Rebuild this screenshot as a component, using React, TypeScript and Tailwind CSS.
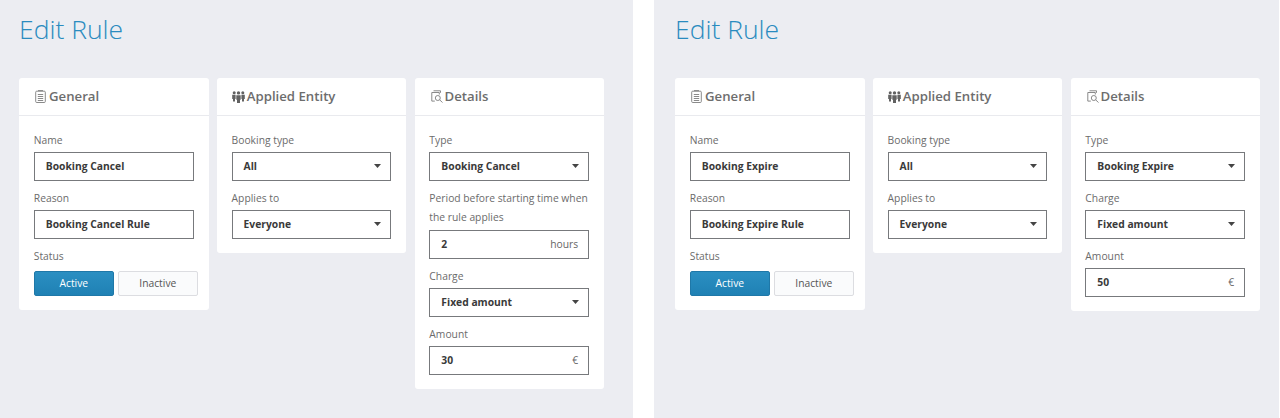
const font = "font-['Open_Sans',sans-serif]";

function Label({ children }: { children: React.ReactNode }) {
  return <div className="whitespace-nowrap text-[10.3px] leading-[19px] text-[#6b6b6b]">{children}</div>;
}

function Caret() {
  return (
    <svg width="7" height="4" viewBox="0 0 7 4" className="mr-[-1px] mb-[1px] shrink-0">
      <path d="M0 0h7L3.5 4z" fill="#444" />
    </svg>
  );
}

function Field({ label, value, suffix, select, tall }: { label: React.ReactNode; value: string; suffix?: string; select?: boolean; tall?: boolean }) {
  return (
    <div className="flex flex-col pt-[8px] first:pt-[15px]">
      <Label>{label}</Label>
      <div className={`${tall ? "mt-[3px]" : "mt-[2px]"} flex h-[29px] items-center justify-between border border-[#77797c] bg-white pl-[11px] pr-[10px]`}>
        <span className="text-[10.3px] font-bold text-[#3a3a3a]">{value}</span>
        {select && <Caret />}
        {suffix && <span className="text-[10.3px] text-[#666]">{suffix}</span>}
      </div>
    </div>
  );
}

function DocIcon() {
  return (
    <svg width="11" height="13" viewBox="0 0 11 13" fill="none" stroke="#7d7d7d" strokeWidth="0.9" className="ml-[1px]">
      <rect x="0.7" y="1.2" width="9.6" height="11.3" rx="1" />
      <path d="M3 0.6h5M2.8 4.5h5.4M2.8 6.5h5.4M2.8 8.5h5.4M2.8 10.5h5.4" />
    </svg>
  );
}

function PeopleIcon() {
  return (
    <svg width="13" height="12" viewBox="0 0 13 12" fill="#626262" className="mr-[-1px]">
      <circle cx="2.2" cy="1.8" r="1.5" />
      <circle cx="6.5" cy="1.9" r="1.7" />
      <circle cx="10.8" cy="1.8" r="1.5" />
      <path d="M0.2 3.8h3.4v4.2H3V10.6H1V8H0.2zM9.4 3.8h3.4V8H12v2.6H10V8h-.6zM4.3 4.2h4.4v4.6H8V12H5V8.8h-.7z" />
    </svg>
  );
}

function SearchDocIcon() {
  return (
    <svg width="12" height="13" viewBox="0 0 12 13" fill="none" stroke="#7d7d7d" strokeWidth="0.9" className="ml-[1px] mr-[-1px]">
      <path d="M2.5 0.8h7v2M0.8 2.5h7.5v2M0.8 2.5v8.6h3" />
      <circle cx="6.8" cy="8" r="2.5" />
      <path d="M8.7 9.9l2.8 2.6" />
    </svg>
  );
}

function Card({ icon, title, children }: { icon: React.ReactNode; title: string; children: React.ReactNode }) {
  return (
    <div className="w-[189.6px] self-start rounded-[3px] bg-white">
      <div className="flex h-[38px] items-center gap-[3px] border-b border-[#e9eaee] pl-[15px] text-[13.2px] font-semibold text-[#6d6d6d]">
        {icon}
        <span>{title}</span>
      </div>
      <div className="pl-[14.8px] pr-[15px] pb-[14px]">{children}</div>
    </div>
  );
}

function Panel({ kind, extra, className }: { kind: string; extra?: boolean; className: string }) {
  return (
    <div className={`h-[418px] bg-[#ecedf2] ${className}`}>
      <h1 className="pt-[12px] text-[26.5px] leading-[34px] font-light text-[#2a8bbf]">Edit Rule</h1>
      <div className="mt-[32px] flex gap-[8.2px]">
        <Card icon={<DocIcon />} title="General">
          <Field label="Name" value={`Booking ${kind}`} />
          <Field label="Reason" value={`Booking ${kind} Rule`} />
          <div className="pt-[8px]">
            <Label>Status</Label>
            <div className="mt-[5px] flex w-[164px] gap-1 text-[10.3px]">
              <button className="h-[25px] w-[80px] rounded-[2px] border border-[#1f78a8] bg-gradient-to-b from-[#2b8fc2] to-[#1f81b4] text-white">Active</button>
              <button className="h-[25px] w-[80px] rounded-[2px] border border-[#dcdde1] bg-[#fafbfc] text-[#555]">Inactive</button>
            </div>
          </div>
        </Card>
        <Card icon={<PeopleIcon />} title="Applied Entity">
          <Field label="Booking type" value="All" select />
          <Field label="Applies to" value="Everyone" select />
        </Card>
        <Card icon={<SearchDocIcon />} title="Details">
          <Field label="Type" value={`Booking ${kind}`} select />
          {extra && <Field label={<>Period before starting time when<br />the rule applies</>} value="2" suffix="hours" tall />}
          <Field label="Charge" value="Fixed amount" select />
          <Field label="Amount" value={extra ? "30" : "50"} suffix="€" />
        </Card>
      </div>
    </div>
  );
}

export default function App() {
  return (
    <div className={`flex h-[418px] w-[1280px] overflow-hidden bg-white ${font}`}>
      <Panel kind="Cancel" extra className="w-[633px] pl-[19px]" />
      <Panel kind="Expire" className="ml-[21px] w-[625px] pl-[21px]" />
    </div>
  );
}
